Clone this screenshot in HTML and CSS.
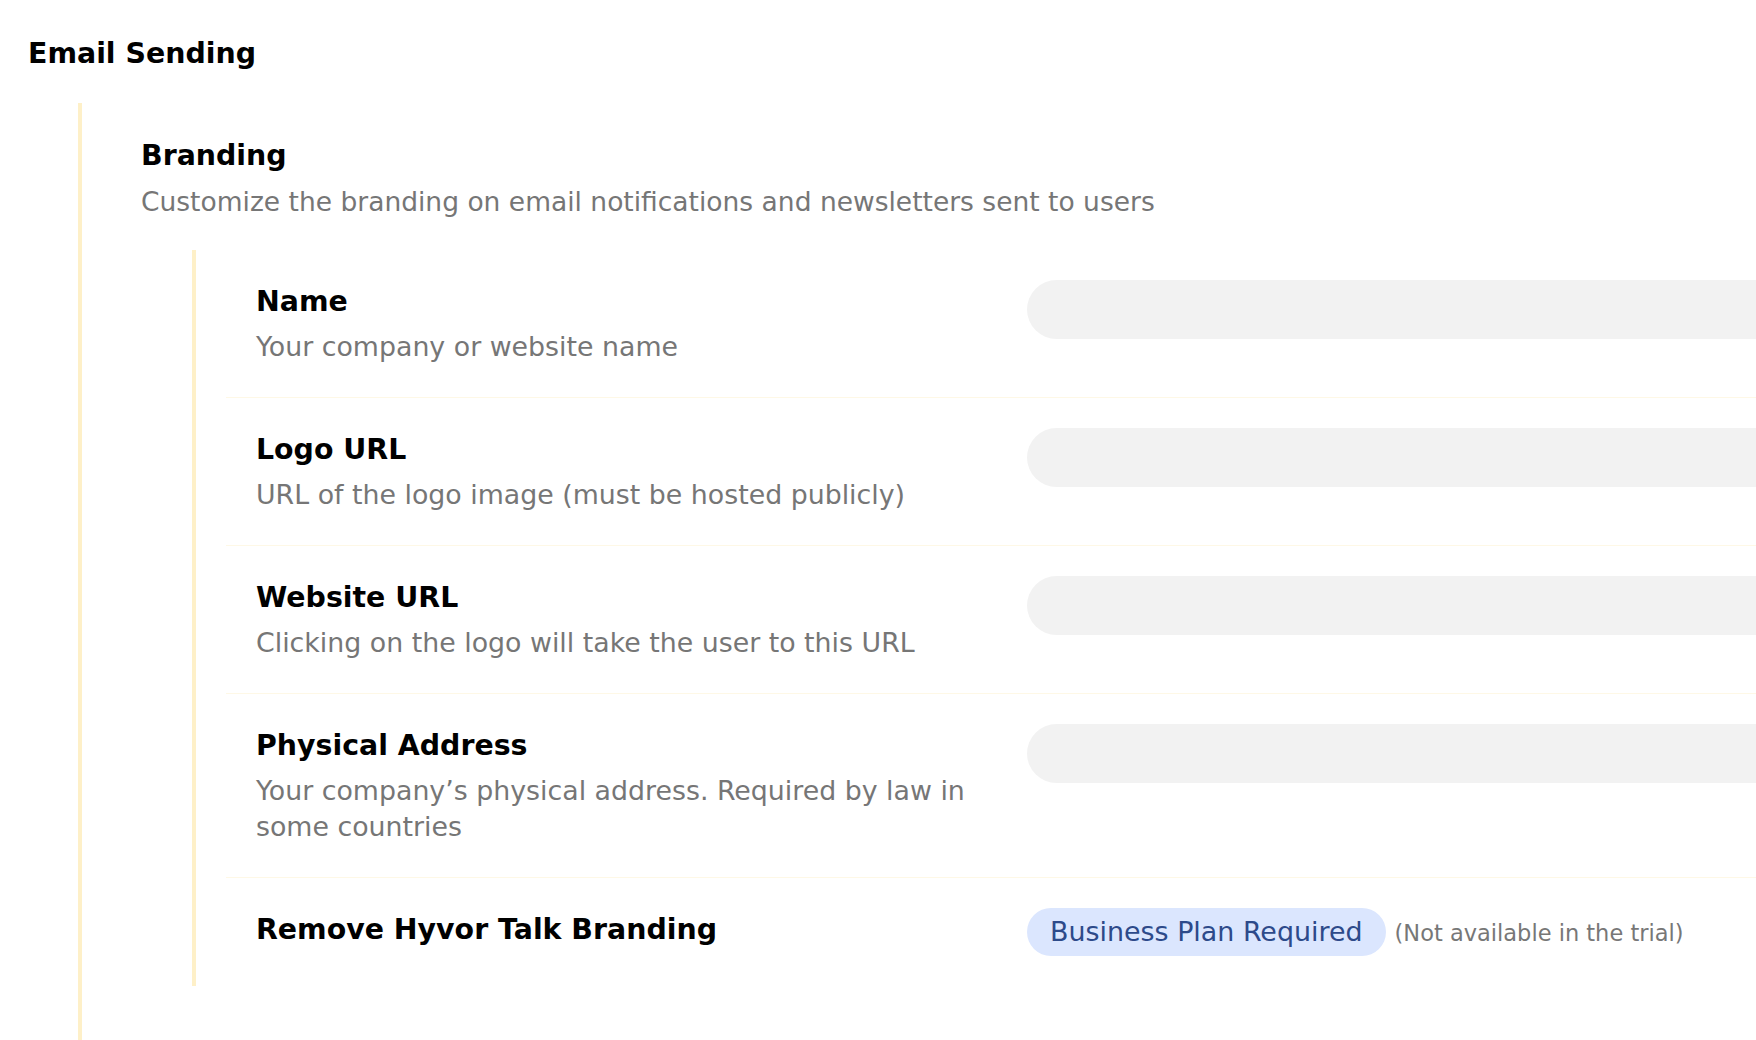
FILE: index.html
```html
<!DOCTYPE html>
<html lang="en">
<head>
<meta charset="utf-8">
<title>Email Sending</title>
<link rel="stylesheet" href="styles.css">
</head>
<body>
<div class="page">
  <h2 class="page-title">Email Sending</h2>
  <section class="group">
    <h3 class="group-title">Branding</h3>
    <p class="group-desc">Customize the branding on email notifications and newsletters sent to users</p>
    <div class="fields">
      <div class="row">
        <div class="label">
          <div class="label-title">Name</div>
          <div class="label-desc">Your company or website name</div>
        </div>
        <div class="control"><div class="input"></div></div>
      </div>
      <div class="row">
        <div class="label">
          <div class="label-title">Logo URL</div>
          <div class="label-desc">URL of the logo image (must be hosted publicly)</div>
        </div>
        <div class="control"><div class="input"></div></div>
      </div>
      <div class="row">
        <div class="label">
          <div class="label-title">Website URL</div>
          <div class="label-desc">Clicking on the logo will take the user to this URL</div>
        </div>
        <div class="control"><div class="input"></div></div>
      </div>
      <div class="row">
        <div class="label">
          <div class="label-title">Physical Address</div>
          <div class="label-desc">Your company’s physical address. Required by law in some countries</div>
        </div>
        <div class="control"><div class="input"></div></div>
      </div>
      <div class="row last">
        <div class="label">
          <div class="label-title">Remove Hyvor Talk Branding</div>
        </div>
        <div class="control inline">
          <span class="badge">Business Plan Required</span>
          <span class="note">(Not available in the trial)</span>
        </div>
      </div>
    </div>
  </section>
</div>
</body>
</html>
```

FILE: styles.css
```css
* {
  box-sizing: border-box;
}

html,
body {
  margin: 0;
  padding: 0;
  overflow: hidden;
  background: #ffffff;
}

body {
  font-family: "DejaVu Sans", "Noto Sans", sans-serif;
  color: #000000;
}

.page {
  width: 1900px;
  padding: 36px 0 0 28px;
}

.page-title {
  margin: 0;
  font-size: 28.4px;
  line-height: 36px;
  font-weight: 700;
}

.group {
  margin: 31px 0 0 50px;
  border-left: 4px solid #fef0c8;
  padding: 34.6px 0 80px 59px;
}

.group-title {
  margin: 0;
  font-size: 28.4px;
  line-height: 36px;
  font-weight: 700;
}

.group-desc {
  margin: 10px 0 0 0;
  font-size: 26.5px;
  line-height: 36px;
  color: #767676;
}

.fields {
  margin: 30px 0 0 51px;
  border-left: 4px solid #fef0c8;
  padding-left: 30px;
}

.row {
  display: grid;
  grid-template-columns: 771px 1fr;
  padding: 30px;
  border-bottom: 1px solid #fef8e6;
}

.row.last {
  border-bottom: none;
}

.label {
  padding-right: 26px;
}

.label-title {
  font-size: 28.4px;
  line-height: 44px;
  font-weight: 700;
}

.label-desc {
  margin: 5px 0 2px 0;
  font-size: 26.8px;
  line-height: 36px;
  color: #767676;
}

.input {
  height: 59px;
  border-radius: 30px;
  background: #f2f2f2;
}

.control.inline {
  display: flex;
  align-items: baseline;
  gap: 9px;
}

.badge {
  display: inline-block;
  padding: 6px 23px;
  border-radius: 24px;
  background: #dbe6fe;
  color: #2d4a8a;
  font-size: 26.9px;
  line-height: 36px;
}

.note {
  font-size: 22.5px;
  line-height: 30px;
  color: #777777;
}
```
